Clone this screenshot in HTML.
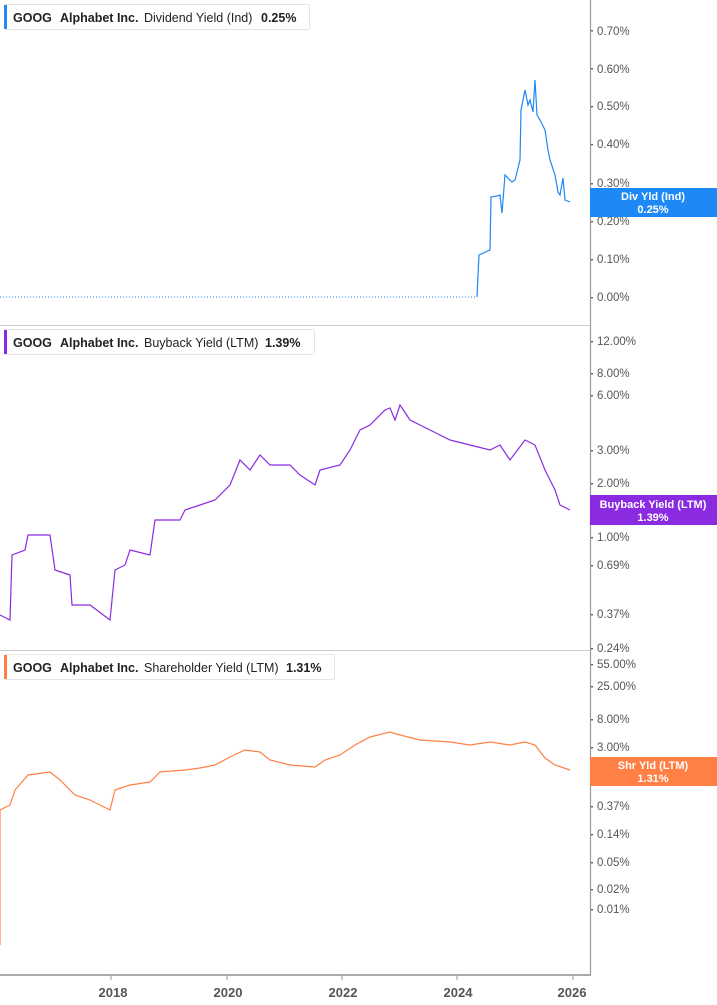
<!DOCTYPE html>
<html><head><meta charset="utf-8"><style>
body{margin:0;background:#fff;font-family:"Liberation Sans",sans-serif}
svg{display:block}
</style></head><body>
<svg width="717" height="1005" viewBox="0 0 717 1005" xmlns="http://www.w3.org/2000/svg" font-family="Liberation Sans, sans-serif">
<rect width="717" height="1005" fill="#fff"/>
<line x1="590.5" y1="0" x2="590.5" y2="975" stroke="#999" stroke-width="1.2"/>
<line x1="0" y1="325.5" x2="590" y2="325.5" stroke="#ccc"/>
<line x1="0" y1="650.5" x2="590" y2="650.5" stroke="#ccc"/>
<line x1="0" y1="975" x2="591" y2="975" stroke="#aaa" stroke-width="2"/>
<g stroke="#999"><line x1="111" y1="975" x2="111" y2="980"/><line x1="227" y1="975" x2="227" y2="980"/><line x1="342" y1="975" x2="342" y2="980"/><line x1="457" y1="975" x2="457" y2="980"/><line x1="573" y1="975" x2="573" y2="980"/></g>
<g font-size="13" font-weight="bold" fill="#555" text-anchor="middle"><text x="113" y="997">2018</text><text x="228" y="997">2020</text><text x="343" y="997">2022</text><text x="458" y="997">2024</text><text x="572" y="997">2026</text></g>
<g fill="#666">
<rect x="591" y="30" width="2" height="1.5"/><rect x="591" y="68" width="2" height="1.5"/><rect x="591" y="106" width="2" height="1.5"/><rect x="591" y="144" width="2" height="1.5"/><rect x="591" y="183" width="2" height="1.5"/><rect x="591" y="221" width="2" height="1.5"/><rect x="591" y="259" width="2" height="1.5"/><rect x="591" y="297" width="2" height="1.5"/>
<rect x="591" y="341" width="2" height="1.5"/><rect x="591" y="373" width="2" height="1.5"/><rect x="591" y="395" width="2" height="1.5"/><rect x="591" y="450" width="2" height="1.5"/><rect x="591" y="483" width="2" height="1.5"/><rect x="591" y="537" width="2" height="1.5"/><rect x="591" y="565" width="2" height="1.5"/><rect x="591" y="614" width="2" height="1.5"/><rect x="591" y="648" width="2" height="1.5"/>
<rect x="591" y="664" width="2" height="1.5"/><rect x="591" y="686" width="2" height="1.5"/><rect x="591" y="719" width="2" height="1.5"/><rect x="591" y="747" width="2" height="1.5"/><rect x="591" y="806" width="2" height="1.5"/><rect x="591" y="834" width="2" height="1.5"/><rect x="591" y="862" width="2" height="1.5"/><rect x="591" y="889" width="2" height="1.5"/><rect x="591" y="909" width="2" height="1.5"/>
</g>
<g font-size="11.5" fill="#555">
<text x="597" y="35">0.70%</text><text x="597" y="73">0.60%</text><text x="597" y="110">0.50%</text><text x="597" y="148">0.40%</text><text x="597" y="187">0.30%</text><text x="597" y="225">0.20%</text><text x="597" y="263">0.10%</text><text x="597" y="301">0.00%</text>
<text x="597" y="345">12.00%</text><text x="597" y="377">8.00%</text><text x="597" y="399">6.00%</text><text x="597" y="454">3.00%</text><text x="597" y="487">2.00%</text><text x="597" y="541">1.00%</text><text x="597" y="569">0.69%</text><text x="597" y="618">0.37%</text><text x="597" y="652">0.24%</text>
<text x="597" y="668">55.00%</text><text x="597" y="690">25.00%</text><text x="597" y="723">8.00%</text><text x="597" y="751">3.00%</text><text x="597" y="778">1.00%</text><text x="597" y="810">0.37%</text><text x="597" y="838">0.14%</text><text x="597" y="866">0.05%</text><text x="597" y="893">0.02%</text><text x="597" y="913">0.01%</text>
</g>
<line x1="0" y1="297" x2="477" y2="297" stroke="#1e88f5" stroke-dasharray="1,2"/>
<polyline fill="none" stroke="#1e88f5" stroke-width="1.2" points="477,297 479,255 490,250 491,197 497,196 500,195 502,213 505,175 512,182 515,180 520,160 521,110 525,90 528,105 530,100 533,112 535,80 537,115 540,120 545,130 548,150 550,160 555,175 558,192 560,195 563,178 565,200 570,202"/>
<polyline fill="none" stroke="#8a2be2" stroke-width="1.2" points="0,615 10,620 12,555 25,550 28,535 50,535 55,570 70,575 72,605 90,605 110,620 115,570 125,565 130,550 150,555 155,520 180,520 185,510 200,505 215,500 230,485 240,460 250,470 260,455 270,465 290,465 300,475 315,485 320,470 340,465 350,450 360,430 370,425 385,410 390,408 395,420 400,405 410,420 430,430 450,440 470,445 490,450 500,445 510,460 525,440 535,445 545,470 555,490 560,505 570,510"/>
<polyline fill="none" stroke="#ff7f45" stroke-width="1.2" points="0,945 0,810 10,805 15,790 28,775 50,772 60,780 75,795 90,800 110,810 115,790 130,785 150,782 160,772 185,770 200,768 215,765 230,757 245,750 260,752 270,760 290,765 315,767 325,760 340,755 355,745 370,737 390,732 400,735 420,740 450,742 470,745 490,742 510,745 525,742 535,745 545,758 555,765 570,770"/>
<rect x="590" y="188" width="127" height="29" fill="#1e88f5"/>
<text x="653" y="200" font-size="11" font-weight="bold" fill="#fff" text-anchor="middle">Div Yld (Ind)</text><text x="653" y="213" font-size="11" font-weight="bold" fill="#fff" text-anchor="middle">0.25%</text>
<rect x="590" y="495" width="127" height="30" fill="#8a2be2"/>
<text x="653" y="508" font-size="11" font-weight="bold" fill="#fff" text-anchor="middle">Buyback Yield (LTM)</text><text x="653" y="521" font-size="11" font-weight="bold" fill="#fff" text-anchor="middle">1.39%</text>
<rect x="590" y="757" width="127" height="29" fill="#ff7f45"/>
<text x="653" y="769" font-size="11" font-weight="bold" fill="#fff" text-anchor="middle">Shr Yld (LTM)</text><text x="653" y="782" font-size="11" font-weight="bold" fill="#fff" text-anchor="middle">1.31%</text>
<g font-size="12.5" font-weight="bold" fill="#222">
<rect x="4.5" y="4.5" width="305" height="25" rx="2" fill="#fff" stroke="#e4e4e4"/><rect x="4" y="5" width="3" height="24" fill="#1e88f5"/>
<text x="13" y="22">GOOG</text><text x="60" y="22">Alphabet Inc.</text><text x="144" y="22" font-weight="normal">Dividend Yield (Ind)</text><text x="261" y="22">0.25%</text>
<rect x="4.5" y="329.5" width="310" height="25" rx="2" fill="#fff" stroke="#e4e4e4"/><rect x="4" y="330" width="3" height="24" fill="#8a2be2"/>
<text x="13" y="347">GOOG</text><text x="60" y="347">Alphabet Inc.</text><text x="144" y="347" font-weight="normal">Buyback Yield (LTM)</text><text x="265" y="347">1.39%</text>
<rect x="4.5" y="654.5" width="330" height="25" rx="2" fill="#fff" stroke="#e4e4e4"/><rect x="4" y="655" width="3" height="24" fill="#ff7f45"/>
<text x="13" y="672">GOOG</text><text x="60" y="672">Alphabet Inc.</text><text x="144" y="672" font-weight="normal">Shareholder Yield (LTM)</text><text x="286" y="672">1.31%</text>
</g>
</svg>
</body></html>
